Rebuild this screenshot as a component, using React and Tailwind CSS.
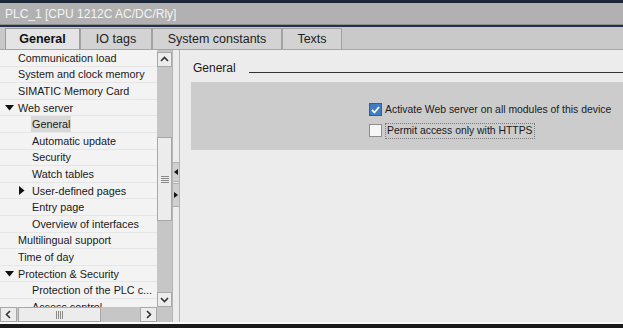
import React from "react";

const font = { fontFamily: '"Liberation Sans", Arial, sans-serif' };

const treeItems = [
  { label: "Communication load", level: 1 },
  { label: "System and clock memory", level: 1 },
  { label: "SIMATIC Memory Card", level: 1 },
  { label: "Web server", level: 1, arrow: "down" },
  { label: "General", level: 2, selected: true },
  { label: "Automatic update", level: 2 },
  { label: "Security", level: 2 },
  { label: "Watch tables", level: 2 },
  { label: "User-defined pages", level: 2, arrow: "right" },
  { label: "Entry page", level: 2 },
  { label: "Overview of interfaces", level: 2 },
  { label: "Multilingual support", level: 1 },
  { label: "Time of day", level: 1 },
  { label: "Protection & Security", level: 1, arrow: "down" },
  { label: "Protection of the PLC c...", level: 2 },
  { label: "Access control", level: 2 },
];

const tabs = [
  { label: "General", active: true, w: "w-[75px]" },
  { label: "IO tags", w: "w-[72px]" },
  { label: "System constants", w: "w-[130px]" },
  { label: "Texts", w: "w-[60px]" },
];

function Arrow({ dir }) {
  if (dir === "down")
    return (
      <svg width="9" height="6" viewBox="0 0 9 6">
        <path d="M0 0 H9 L4.5 5.5 Z" fill="#111" />
      </svg>
    );
  return (
    <svg width="6" height="9" viewBox="0 0 6 9">
      <path d="M0 0 V9 L5.5 4.5 Z" fill="#111" />
    </svg>
  );
}

function Chevron({ d }) {
  return (
    <svg width="9" height="9" viewBox="0 0 9 9">
      <path d={d} fill="none" stroke="#333" strokeWidth="1.6" />
    </svg>
  );
}

function ScrollBtn({ d, className = "" }) {
  return (
    <div className={`flex items-center justify-center bg-[#ececec] border border-[#a8a8a8] ${className}`}>
      <Chevron d={d} />
    </div>
  );
}

function Tree() {
  return (
    <div className="flex-1 bg-[#f3f3f3] overflow-hidden">
      {treeItems.map((item) => (
        <div
          key={item.label}
          className="h-[16.6px] flex items-center border-b border-[#e6e6e6] text-[10.8px] text-[#1a1a1a] whitespace-nowrap"
        >
          <div className={`flex items-center justify-center ${item.level === 1 ? "w-[17px] pl-[2px]" : "w-[31px] pl-[12px]"}`}>
            {item.arrow && <Arrow dir={item.arrow} />}
          </div>
          <span className={`px-[1px] leading-[16px] ${item.selected ? "bg-[#d9d9d9]" : ""}`}>{item.label}</span>
        </div>
      ))}
    </div>
  );
}

function VScroll() {
  return (
    <div className="w-[15px] flex flex-col bg-[#c6c6c6] pt-[2px]">
      <ScrollBtn d="M1 6 L4.5 2.5 L8 6" className="h-[15px]" />
      <div className="h-[70px]" />
      <div className="h-[85px] bg-[#ececec] border border-[#a8a8a8] flex items-center justify-center">
        <div className="w-[8px] flex flex-col gap-[1px]">
          <div className="h-px bg-[#8a8a8a]" />
          <div className="h-px bg-[#8a8a8a]" />
          <div className="h-px bg-[#8a8a8a]" />
          <div className="h-px bg-[#8a8a8a]" />
        </div>
      </div>
      <div className="h-[71px]" />
      <ScrollBtn d="M1 3 L4.5 6.5 L8 3" className="h-[15px]" />
    </div>
  );
}

function HScroll() {
  return (
    <div className="h-[15px] flex bg-[#c6c6c6]">
      <ScrollBtn d="M6 1 L2.5 4.5 L6 8" className="w-[17px]" />
      <div className="w-[83px] ml-[1px] bg-[#ececec] border border-[#a8a8a8] flex items-center justify-center">
        <div className="h-[8px] flex gap-[1px]">
          <div className="w-px bg-[#8a8a8a]" />
          <div className="w-px bg-[#8a8a8a]" />
          <div className="w-px bg-[#8a8a8a]" />
          <div className="w-px bg-[#8a8a8a]" />
        </div>
      </div>
      <div className="flex-1" />
      <ScrollBtn d="M3 1 L6.5 4.5 L3 8" className="w-[17px]" />
      <div className="w-[15px] bg-[#c6c6c6]" />
    </div>
  );
}

function Splitter() {
  return (
    <div className="w-[11px] bg-[#e4e4e4] flex">
      <div className="w-px bg-[#b5b5b5]" />
      <div className="w-[6px] flex flex-col items-center pt-[112px] bg-[#ececec]">
        <div className="h-[20px] w-[6px] bg-[#cfcfcf] border-y border-[#b0b0b0] flex items-center justify-center">
          <svg width="4" height="6" viewBox="0 0 4 6"><path d="M4 0 V6 L0 3 Z" fill="#111" /></svg>
        </div>
        <div className="h-[24px] w-[6px] mt-[1px] bg-[#cfcfcf] border-y border-[#b0b0b0] flex items-center justify-center">
          <svg width="4" height="6" viewBox="0 0 4 6"><path d="M0 0 V6 L4 3 Z" fill="#111" /></svg>
        </div>
      </div>
      <div className="w-px bg-[#b5b5b5]" />
      <div className="flex-1 bg-[#ececec]" />
    </div>
  );
}

function Checkbox({ checked }) {
  return checked ? (
    <div className="w-[13px] h-[13px] shrink-0 bg-[#3d7cc9] border border-[#2b5f9e] flex items-center justify-center">
      <svg width="9" height="8" viewBox="0 0 9 8">
        <path d="M1 4 L3.5 6.5 L8 1" fill="none" stroke="#fff" strokeWidth="1.8" />
      </svg>
    </div>
  ) : (
    <div className="w-[13px] h-[13px] shrink-0 bg-[#f6f6f6] border border-[#8e8e8e]" />
  );
}

export default function App() {
  return (
    <div className="w-[623px] h-[328px] flex flex-col bg-[#ececec] overflow-hidden" style={font}>
      <div className="h-[3px] bg-[#1d2738]" />
      <div className="h-[22px] bg-[#b1b1b1] flex items-center px-[5px] text-[12px] text-[#f4f4f4] border-b border-[#8c8c8c]">
        PLC_1 [CPU 1212C AC/DC/Rly]
      </div>
      <div className="h-[2px] bg-[#26304a]" />
      <div className="h-[23px] bg-[#c9c9c9] flex items-end pl-[5px] border-b border-[#a5a5a5]">
        {tabs.map((t) => (
          <div
            key={t.label}
            className={`${t.w} h-[21px] flex items-center justify-center text-[12.5px] border border-b-0 ${
              t.active
                ? "bg-[#e4e4e4] border-[#9a9a9a] font-bold text-[#111]"
                : "bg-[#d3d3d3] border-[#a3a3a3] text-[#222]"
            }`}
          >
            {t.label}
          </div>
        ))}
      </div>
      <div className="flex-1 flex min-h-0">
        <div className="w-[172px] flex flex-col">
          <div className="flex-1 flex min-h-0">
            <Tree />
            <VScroll />
          </div>
          <HScroll />
        </div>
        <Splitter />
        <div className="flex-1 min-w-0 bg-[#ececec] pt-[10px] pl-[8px]">
          <div className="flex items-center h-[16px] pl-[2px]">
            <span className="text-[12px] text-[#1a1a1a]">General</span>
            <div className="flex-1 ml-[13px] h-px bg-[#333] mt-[8px]" />
          </div>
          <div className="mt-[6px] h-[68px] bg-[#cccccc] pl-[178px] pt-[21px] flex flex-col gap-[8px] text-[10.4px] text-[#1a1a1a] whitespace-nowrap overflow-hidden">
            <div className="flex items-center gap-[3px] h-[13px]">
              <Checkbox checked />
              <span>Activate Web server on all modules of this device</span>
            </div>
            <div className="flex items-center gap-[3px] h-[13px]">
              <Checkbox />
              <span className="border border-dotted border-[#7a7a7a] px-[1px] leading-[14px]">Permit access only with HTTPS</span>
            </div>
          </div>
        </div>
      </div>
      <div className="h-[2px] bg-[#fafafa]" />
      <div className="h-[4px] bg-[#1a1a1a]" />
    </div>
  );
}
